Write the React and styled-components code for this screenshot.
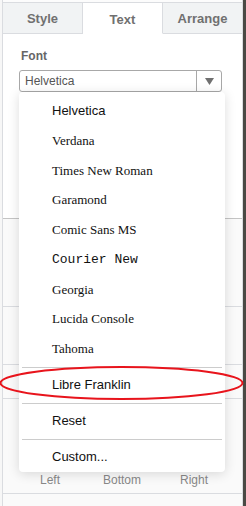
import React from "react";
import styled, { createGlobalStyle } from "styled-components";

const GlobalStyle = createGlobalStyle`
  html, body {
    margin: 0;
    padding: 0;
    background: #fafafa;
  }
  * {
    box-sizing: border-box;
  }
`;

const Page = styled.div`
  position: relative;
  width: 246px;
  height: 506px;
  display: flex;
  overflow: hidden;
  font-family: "Liberation Sans", Arial, sans-serif;
  background: #f7f7f7;
`;

const Gutter = styled.div`
  width: 2px;
  background: #f7f7f7;
`;

const DarkStrip = styled.div`
  width: 3px;
  background: #4a4944;
`;

const Panel = styled.div`
  position: relative;
  flex: 1;
  display: flex;
  flex-direction: column;
  background: #fcfcfc;
  border-left: 1px solid #dadce0;
  border-right: 1px solid #dadce0;
`;

const TabBar = styled.div`
  display: flex;
  height: 34px;
  padding-top: 2px;
  background: #fcfcfc;
`;

const Tab = styled.div`
  flex: 1;
  display: flex;
  align-items: center;
  justify-content: center;
  font-size: 13px;
  font-weight: bold;
  color: #707070;
  background: ${(p) => (p.$active ? "#ffffff" : "#f1f3f4")};
  border-top: 1px solid #dadce0;
  border-right: ${(p) => (p.$last ? "none" : "1px solid #dadce0")};
  border-bottom: ${(p) => (p.$active ? "1px solid transparent" : "1px solid #dadce0")};
  padding-top: ${(p) => (p.$active ? "2px" : "0")};
`;

const Section = styled.div`
  position: relative;
  height: ${(p) => p.$h}px;
  border-bottom: 1px solid ${(p) => p.$line || "#dadce0"};
  background: ${(p) => p.$bg || "#fafafa"};
`;

const FontSection = styled(Section)`
  padding: 14px 0 0 16px;
`;

const Label = styled.div`
  font-size: 12px;
  font-weight: bold;
  color: #666666;
  margin-left: 2px;
  height: 16px;
  line-height: 16px;
`;

const Select = styled.div`
  position: relative;
  margin-top: 6px;
  width: 203px;
  height: 22px;
  display: flex;
  border: 1px solid #a8a8a8;
  border-radius: 3px;
  background: #ffffff;
`;

const SelectValue = styled.div`
  flex: 1;
  padding-left: 5px;
  font-size: 12px;
  line-height: 20px;
  color: #555555;
`;

const SelectArrow = styled.div`
  width: 25px;
  display: flex;
  align-items: center;
  justify-content: center;
  border-left: 1px solid #a8a8a8;
`;

const Menu = styled.div`
  position: absolute;
  top: 21px;
  left: -1px;
  width: 206px;
  padding: 4px 0 0;
  background: #ffffff;
  border-radius: 4px;
  box-shadow: 0 2px 12px rgba(0, 0, 0, 0.14);
  z-index: 5;
`;

const Item = styled.div`
  height: ${(p) => (p.$compact ? "29.75px" : "30px")};
  line-height: ${(p) => (p.$compact ? "29.75px" : "30px")};
  padding-left: 33px;
  font-size: 13px;
  color: #111111;
  font-family: ${(p) => p.$font};
  white-space: nowrap;
`;

const Separator = styled.div`
  height: 1px;
  margin: 3px 3px 2px;
  background: #cccccc;
`;

const AlignRow = styled.div`
  position: absolute;
  left: 0;
  right: 0;
  bottom: 6px;
  display: grid;
  grid-template-columns: repeat(3, 1fr);
  padding: 0 12px 0 11px;
`;

const AlignLabel = styled.div`
  text-align: center;
  font-size: 12px;
  color: #888888;
`;

const Annotation = styled.svg`
  position: absolute;
  left: 0;
  top: 365px;
  pointer-events: none;
  z-index: 10;
`;

const SANS = '"Liberation Sans", Arial, sans-serif';
const SERIF = '"Liberation Serif", "Times New Roman", serif';
const MONO = '"Liberation Mono", "Courier New", monospace';

const fonts = [
  { name: "Helvetica", font: SANS },
  { name: "Verdana", font: SERIF },
  { name: "Times New Roman", font: SERIF },
  { name: "Garamond", font: SERIF },
  { name: "Comic Sans MS", font: SERIF },
  { name: "Courier New", font: MONO },
  { name: "Georgia", font: SERIF },
  { name: "Lucida Console", font: SERIF },
  { name: "Tahoma", font: SERIF },
];

export default function App() {
  return (
    <>
      <GlobalStyle />
      <Page>
        <Gutter />
        <Panel>
          <TabBar>
            <Tab>Style</Tab>
            <Tab $active>Text</Tab>
            <Tab $last>Arrange</Tab>
          </TabBar>

          <FontSection $h={185} $line="#c4c4c4" $bg="#ffffff">
            <Label>Font</Label>
            <Select>
              <SelectValue>Helvetica</SelectValue>
              <SelectArrow>
                <svg width="9" height="7" viewBox="0 0 9 7">
                  <path d="M0 0 L9 0 L4.5 7 Z" fill="#707070" />
                </svg>
              </SelectArrow>
              <Menu>
                {fonts.map((f) => (
                  <Item key={f.name} $font={f.font} $compact>
                    {f.name}
                  </Item>
                ))}
                <Separator />
                <Item $font={SANS}>Libre Franklin</Item>
                <Separator />
                <Item $font={SANS}>Reset</Item>
                <Separator />
                <Item $font={SANS}>Custom...</Item>
              </Menu>
            </Select>
          </FontSection>

          <Section $h={88} />
          <Section $h={58} />
          <Section $h={34} />
          <Section $h={95}>
            <AlignRow>
              <AlignLabel>Left</AlignLabel>
              <AlignLabel>Bottom</AlignLabel>
              <AlignLabel>Right</AlignLabel>
            </AlignRow>
          </Section>
          <Section $h={12} $line="transparent" />
        </Panel>
        <DarkStrip />

        <Annotation width="246" height="38" viewBox="0 0 246 38">
          <ellipse
            cx="121.5"
            cy="18"
            rx="121"
            ry="16"
            fill="none"
            stroke="#e8141c"
            strokeWidth="2"
          />
        </Annotation>
      </Page>
    </>
  );
}
